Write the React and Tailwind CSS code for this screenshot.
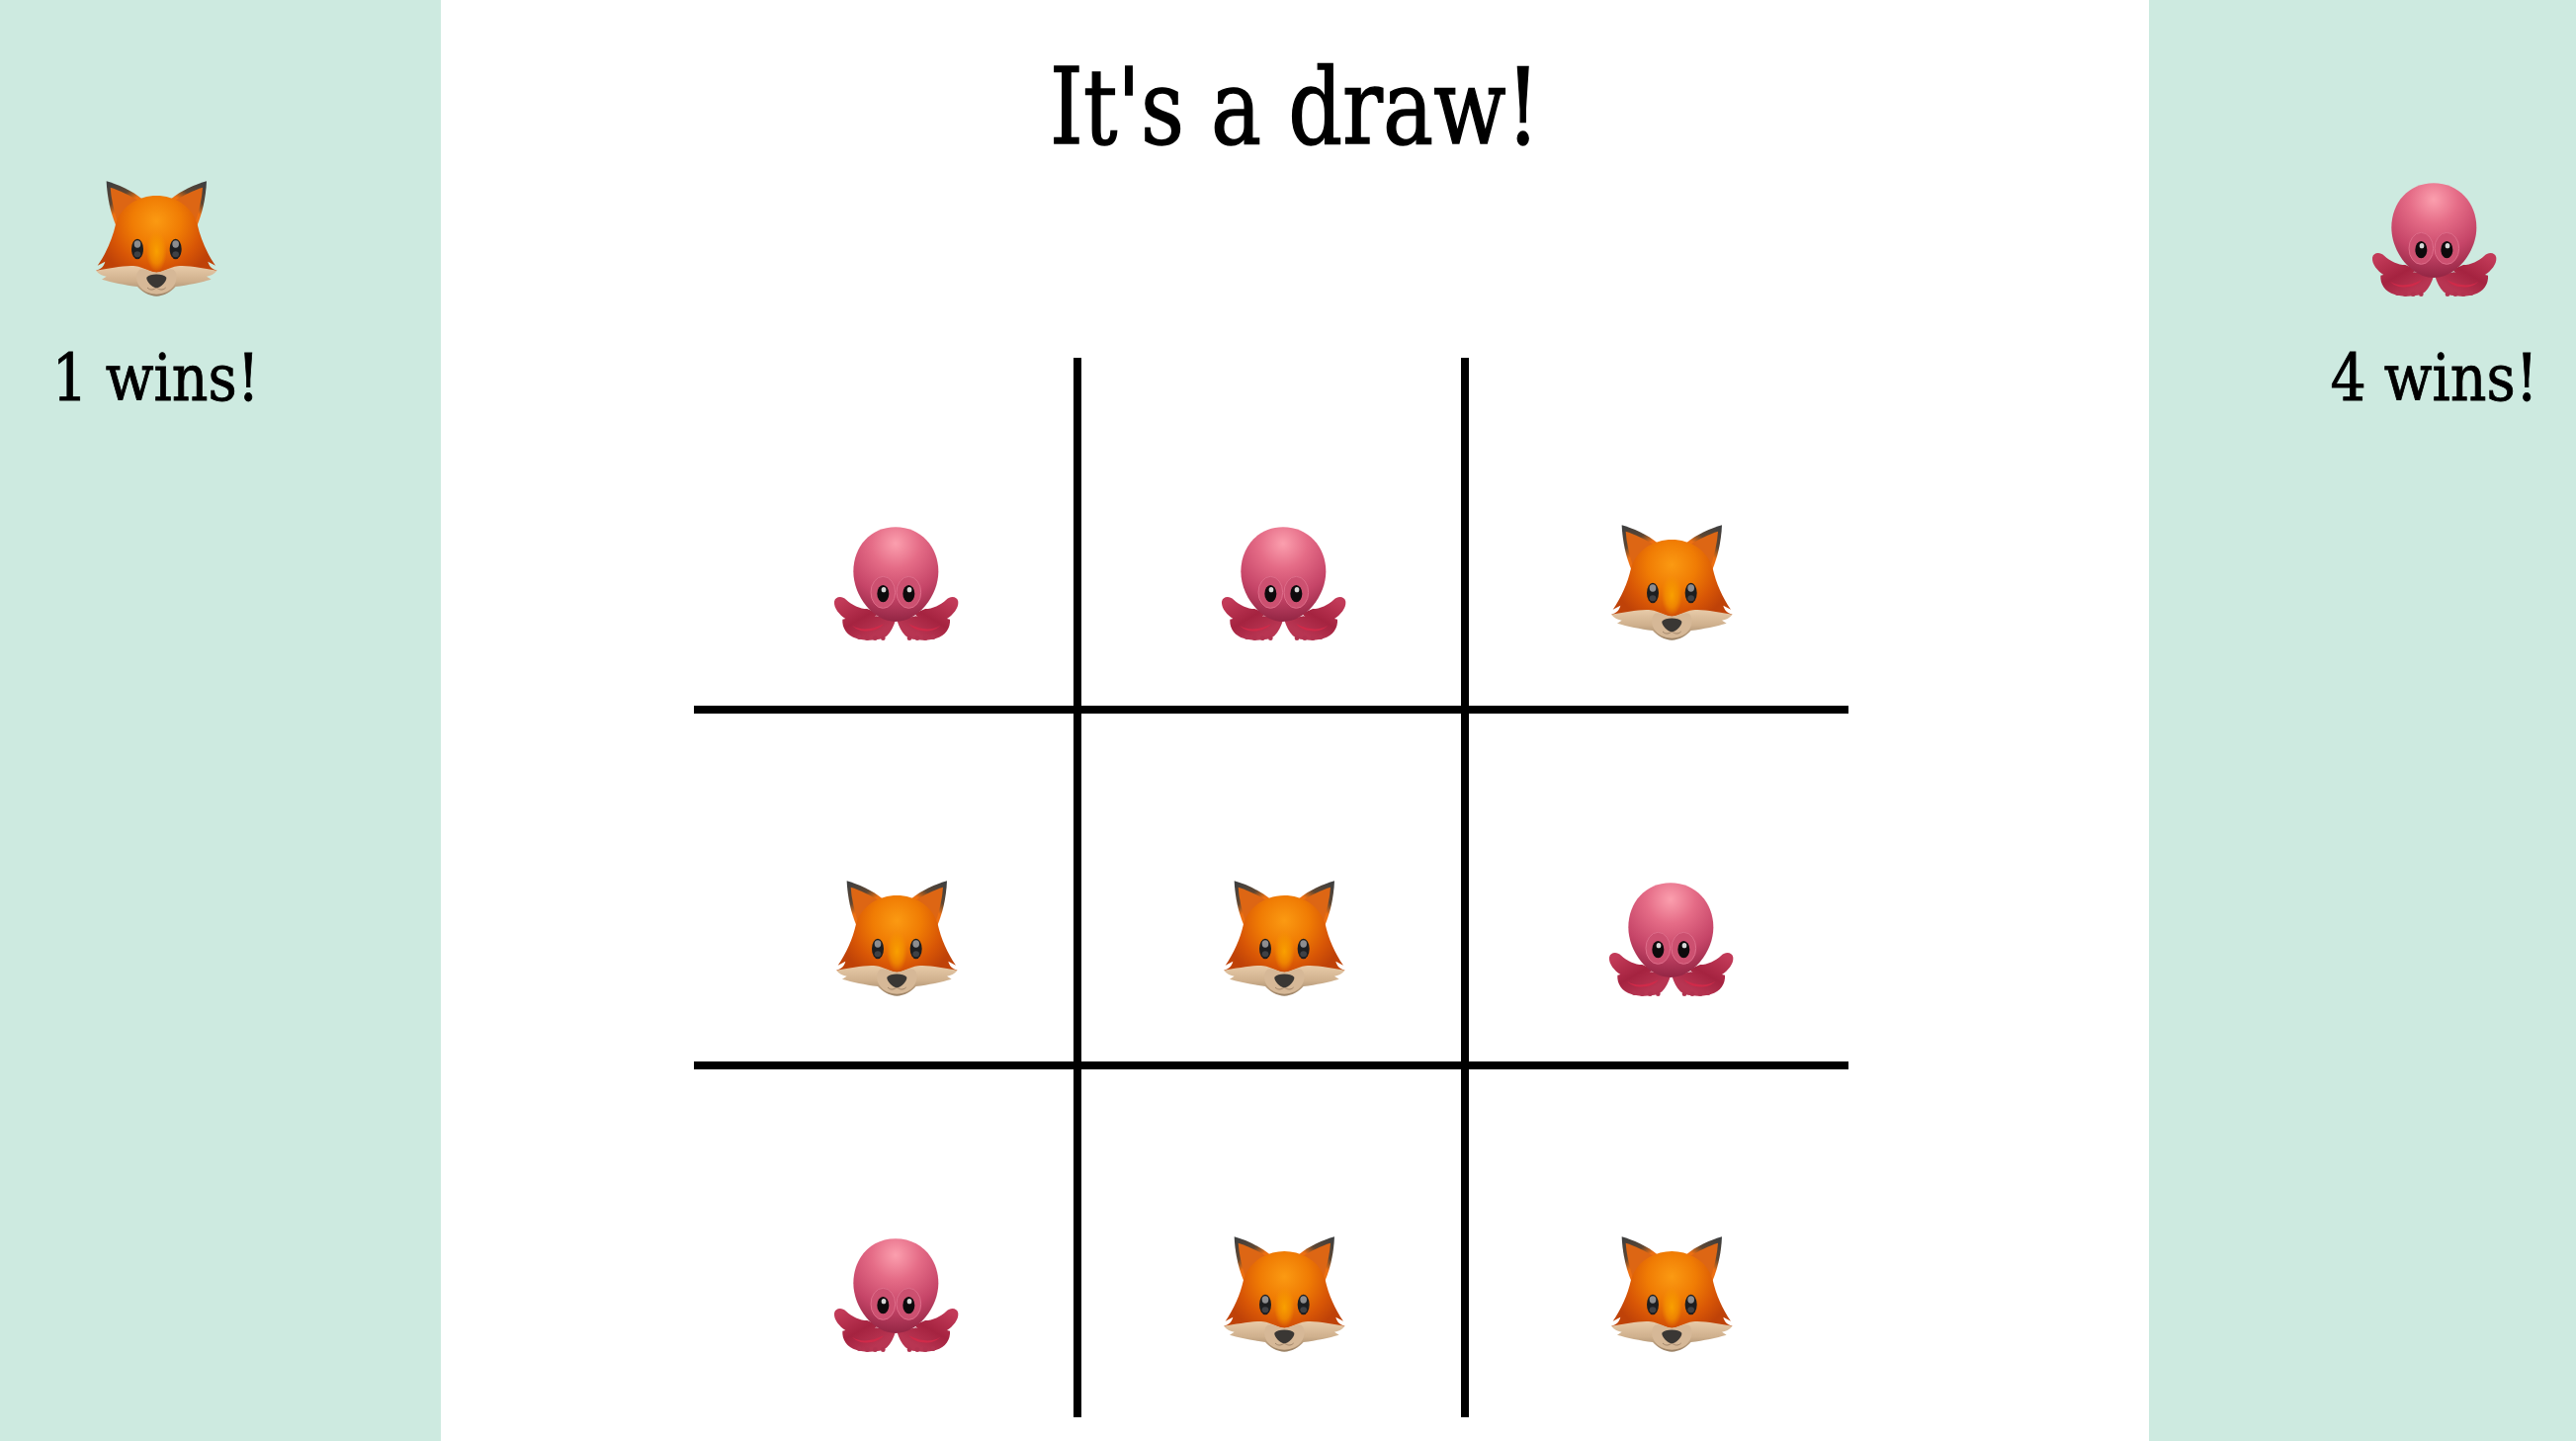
import React from 'react';

const board = ['octopus', 'octopus', 'fox', 'fox', 'fox', 'octopus', 'octopus', 'fox', 'fox'];

function Fox() {
  return (
    <svg viewBox="48 30 384 384" className="w-32 h-32 block shrink-0">
      <defs>
        <radialGradient id="foxHead" gradientUnits="userSpaceOnUse" cx="244" cy="170" r="185">
          <stop offset="0" stopColor="#fb9a12" />
          <stop offset="0.4" stopColor="#f07c04" />
          <stop offset="0.75" stopColor="#d85606" />
          <stop offset="1" stopColor="#bf4208" />
        </radialGradient>
        <radialGradient id="foxBridge" gradientUnits="userSpaceOnUse" cx="244" cy="262" r="62" gradientTransform="translate(122 0) scale(0.5 1)">
          <stop offset="0" stopColor="#f9a000" />
          <stop offset="0.6" stopColor="#f59400" stopOpacity="0.7" />
          <stop offset="1" stopColor="#f59400" stopOpacity="0" />
        </radialGradient>
        <linearGradient id="foxEar" gradientUnits="userSpaceOnUse" x1="100" y1="55" x2="170" y2="150">
          <stop offset="0" stopColor="#3f3f3f" />
          <stop offset="0.45" stopColor="#5e4632" />
          <stop offset="0.72" stopColor="#ec6f12" />
        </linearGradient>
        <linearGradient id="foxFur" gradientUnits="userSpaceOnUse" x1="244" y1="305" x2="244" y2="400">
          <stop offset="0" stopColor="#e8cba9" />
          <stop offset="0.5" stopColor="#cfb08d" />
          <stop offset="1" stopColor="#977e62" />
        </linearGradient>
      </defs>
      {[false, true].map((flip) => (
        <g key={String(flip)} transform={flip ? 'translate(488 0) scale(-1 1)' : undefined}>
          <path d="M92 49C125 58 170 78 200 103L122 186C106 150 94 100 92 49Z" fill="url(#foxEar)" />
          <path d="M104 68C130 76 165 92 188 108L124 168C114 135 106 100 104 68Z" fill="#dd6614" />
        </g>
      ))}
      <path
        d="M244 93C190 93 135 125 120 180C110 225 90 270 65 305L88 293C85 305 78 315 60 320L180 345H308L428 320C410 315 403 305 400 293L423 305C398 270 378 225 368 180C353 125 298 93 244 93Z"
        fill="url(#foxHead)"
      />
      <ellipse cx="244" cy="262" rx="34" ry="64" fill="url(#foxBridge)" />
      <path
        d="M60 320C100 315 150 303 180 307C205 310 225 326 244 326C263 326 283 310 308 307C338 303 388 315 428 320C418 331 408 336 396 338L410 347C380 356 340 364 302 369C290 384 265 398 244 398C223 398 198 384 186 369C148 364 108 356 78 347L92 338C80 336 70 331 60 320Z"
        fill="url(#foxFur)"
      />
      <path d="M244 326C225 326 205 310 192 318C178 330 182 358 196 372C208 386 228 392 244 392C260 392 280 386 292 372C306 358 310 330 296 318C283 310 263 326 244 326Z" fill="#d6b897" />
      <path d="M216 372C226 382 236 378 244 372C252 378 262 382 272 372" fill="none" stroke="#a08469" strokeWidth="3" />
      <path d="M214 341C224 328 264 328 274 341C276 352 256 373 244 373C232 373 212 352 214 341Z" fill="#3a3734" />
      {[186, 302].map((cx) => (
        <g key={cx}>
          <ellipse cx={cx} cy="255" rx="18" ry="31" fill="#1d1e20" />
          <ellipse cx={cx} cy="240" rx="10" ry="11" fill="#8d8d8f" />
          <ellipse cx={cx} cy="271" rx="10" ry="9" fill="#3f4145" />
        </g>
      ))}
    </svg>
  );
}

function Octopus() {
  return (
    <svg viewBox="66 45 384 384" className="w-32 h-32 block shrink-0">
      <defs>
        <radialGradient id="octoHead" gradientUnits="userSpaceOnUse" cx="258" cy="120" r="245">
          <stop offset="0" stopColor="#fb9fae" />
          <stop offset="0.3" stopColor="#e56c87" />
          <stop offset="0.65" stopColor="#c64568" />
          <stop offset="1" stopColor="#8e2240" />
        </radialGradient>
        <linearGradient id="octoLeg" gradientUnits="userSpaceOnUse" x1="100" y1="290" x2="170" y2="410">
          <stop offset="0" stopColor="#c23a58" />
          <stop offset="0.55" stopColor="#a52340" />
          <stop offset="1" stopColor="#b83552" />
        </linearGradient>
      </defs>
      {[false, true].map((flip) => (
        <g key={String(flip)} transform={flip ? 'translate(520 0) scale(-1 1)' : undefined}>
          <path d="M97 350C128 340 165 350 200 340L258 352C252 372 244 388 232 400C215 416 165 416 140 408C110 400 95 375 97 350Z" fill="url(#octoLeg)" />
          {[148, 172, 196, 220].map((cx) => (
            <circle key={cx} cx={cx} cy={cx < 160 ? 404 : 407} r="7" fill="#b23350" />
          ))}
          <path d="M126 368C148 384 182 384 222 364C204 388 152 396 126 368Z" fill="#d02a49" />
          <path d="M72 296C75 280 95 278 108 290C125 306 150 318 172 318L205 332C180 362 134 364 106 348C88 336 70 316 72 296Z" fill="url(#octoLeg)" />
        </g>
      ))}
      <path d="M258 70C335 70 388 130 388 205C388 280 325 357 258 357C191 357 130 280 130 205C130 130 181 70 258 70Z" fill="url(#octoHead)" />
      {[220, 298].map((cx) => (
        <g key={cx}>
          <ellipse cx={cx} cy="268" rx="37" ry="48" fill="#cc5070" stroke="#de6d8a" strokeWidth="3" />
          <ellipse cx={cx} cy="272" rx="18" ry="26" fill="#0d0a0c" />
          <ellipse cx={cx + 2} cy="260" rx="7" ry="8" fill="#d8d8d8" />
        </g>
      ))}
    </svg>
  );
}

const Piece = ({ type }) => (type === 'fox' ? <Fox /> : <Octopus />);

function Score({ type, wins, className }) {
  return (
    <aside className={`bg-[#cdeae0] pt-[177px] ${className}`}>
      <div className="w-[208px] flex flex-col items-center">
        <Piece type={type} />
        <p className="mt-[38px] text-[66px] leading-[80px] whitespace-nowrap scale-x-[0.96] [font-stretch:condensed] [-webkit-text-stroke:0.8px_#000]">{wins} wins!</p>
      </div>
    </aside>
  );
}

export default function App() {
  return (
    <div className="flex h-screen overflow-hidden bg-white text-black font-['DejaVu_Serif',serif]">
      <Score type="fox" wins={1} className="w-[446px] pl-[53px]" />
      <main className="flex-1">
        <div className="h-[362px] pt-[48px]">
          <h1 className="text-center text-[107px] leading-[120px] font-normal scale-x-[0.89] [font-stretch:condensed] [-webkit-text-stroke:1.4px_#000]">It's a draw!</h1>
        </div>
        <div className="ml-[256px] w-[1168px] grid grid-cols-3 gap-2 bg-black">
          {board.map((type, i) => (
            <div key={i} className="h-[352px] bg-white flex items-center justify-center pl-6 pt-[102px]">
              <Piece type={type} />
            </div>
          ))}
        </div>
      </main>
      <Score type="octopus" wins={4} className="w-[432px] pl-[184px]" />
    </div>
  );
}
